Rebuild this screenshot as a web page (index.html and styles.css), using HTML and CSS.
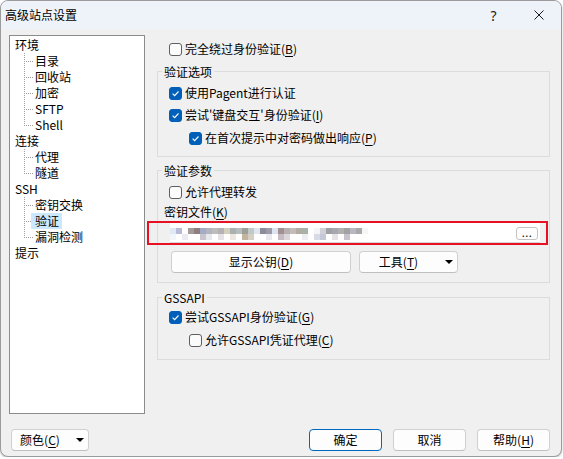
FILE: index.html
```html
<!DOCTYPE html>
<html lang="zh-CN">
<head>
  <meta charset="UTF-8" />
  <meta name="viewport" content="width=device-width, initial-scale=1.0" />
  <title>高级站点设置</title>
  <link rel="stylesheet" href="styles.css">
</head>
<body>
  <div class="window">
    <div class="titlebar">
      <div class="title">高级站点设置</div>
      <div class="caption-btn help">?</div>
      <div class="caption-btn">
        <svg width="10" height="10" viewBox="0 0 10 10"><path d="M0.5 0.5 9.5 9.5M9.5 0.5 0.5 9.5" stroke="#1a1a1a" stroke-width="1" fill="none"/></svg>
      </div>
    </div>

    <div class="main">
      <ul class="tree">
        <li class="node">环境</li>
        <li class="leaf">目录</li>
        <li class="leaf">回收站</li>
        <li class="leaf">加密</li>
        <li class="leaf">SFTP</li>
        <li class="leaf last">Shell</li>
        <li class="node">连接</li>
        <li class="leaf">代理</li>
        <li class="leaf last">隧道</li>
        <li class="node">SSH</li>
        <li class="leaf">密钥交换</li>
        <li class="leaf"><span class="selected">验证</span></li>
        <li class="leaf last">漏洞检测</li>
        <li class="node">提示</li>
      </ul>

      <div class="panel">
        <label class="check top"><span class="box"></span>完全绕过身份验证(<u>B</u>)</label>

        <div class="group">
          <div class="legend">验证选项</div>
          <label class="check"><span class="box on"><svg width="11" height="11" viewBox="0 0 11 11"><path d="M2.6 5.6 4.6 7.6 8.5 3.5" stroke="#fff" stroke-width="1.1" fill="none"/></svg></span>使用Pagent进行认证</label>
          <label class="check"><span class="box on"><svg width="11" height="11" viewBox="0 0 11 11"><path d="M2.6 5.6 4.6 7.6 8.5 3.5" stroke="#fff" stroke-width="1.1" fill="none"/></svg></span>尝试'键盘交互'身份验证(<u>I</u>)</label>
          <label class="check sub"><span class="box on"><svg width="11" height="11" viewBox="0 0 11 11"><path d="M2.6 5.6 4.6 7.6 8.5 3.5" stroke="#fff" stroke-width="1.1" fill="none"/></svg></span>在首次提示中对密码做出响应(<u>P</u>)</label>
        </div>

        <div class="group auth-params">
          <div class="legend">验证参数</div>
          <label class="check"><span class="box"></span>允许代理转发</label>
          <div class="field-label">密钥文件(<u>K</u>)</div>
          <div class="keyrow">
            <div class="keyfile">
              <div class="mosaic"></div>
              <div class="browse">...</div>
            </div>
          </div>
          <div class="btnrow">
            <div class="btn btn-wide">显示公钥(<u>D</u>)</div>
            <div class="btn btn-menu tools"><span class="btn-text">工具(<u>T</u>)</span><span class="caret"></span></div>
          </div>
        </div>

        <div class="group gss">
          <div class="legend">GSSAPI</div>
          <label class="check"><span class="box on"><svg width="11" height="11" viewBox="0 0 11 11"><path d="M2.6 5.6 4.6 7.6 8.5 3.5" stroke="#fff" stroke-width="1.1" fill="none"/></svg></span>尝试GSSAPI身份验证(<u>G</u>)</label>
          <label class="check sub"><span class="box"></span>允许GSSAPI凭证代理(<u>C</u>)</label>
        </div>
      </div>
    </div>

    <div class="footer">
      <div class="btn btn-menu colors"><span class="btn-text">颜色(<u>C</u>)</span><span class="caret"></span></div>
      <div class="footer-right">
        <div class="btn btn-dlg default">确定</div>
        <div class="btn btn-dlg">取消</div>
        <div class="btn btn-dlg">帮助(<u>H</u>)</div>
      </div>
    </div>
  </div>
</body>
</html>
```

FILE: styles.css
```css
* {
  box-sizing: border-box;
}
body {
  margin: 0;
  background: #fff;
  font-family: "Noto Sans CJK SC", "Noto Sans", sans-serif;
  font-size: 12px;
  color: #000;
}
u {
  text-underline-offset: 2px;
}
.window {
  width: 562px;
  height: 457px;
  border: 1px solid #9b9b9b;
  border-radius: 8px;
  background: #f0f0f0;
  overflow: hidden;
  display: flex;
  flex-direction: column;
  box-shadow: 0 1px 2px rgba(0, 0, 0, 0.25);
}
.titlebar {
  height: 28px;
  flex: none;
  background: #eef3fa;
  display: flex;
  align-items: center;
}
.title {
  flex: 1;
  padding-left: 4px;
  line-height: 16px;
}
.caption-btn {
  width: 45px;
  height: 28px;
  display: flex;
  align-items: center;
  justify-content: center;
}
.help {
  font-family: "Noto Sans", sans-serif;
  font-size: 14px;
  color: #1a1a1a;
}

.main {
  display: flex;
  gap: 12px;
  padding: 6px 0 0 8px;
}
.tree {
  width: 136px;
  height: 379px;
  margin: 0;
  padding: 1px 0 0;
  list-style: none;
  background: #fff;
  border: 1px solid #8c8c8c;
  flex: none;
}
.tree li {
  height: 16px;
  line-height: 16px;
  white-space: nowrap;
}
.node {
  padding-left: 5px;
}
.leaf {
  padding-left: 25px;
  background:
    repeating-linear-gradient(to right, #a0a0a0 0 1px, transparent 1px 2px) 14px 8px / 9px 1px no-repeat,
    repeating-linear-gradient(to bottom, #a0a0a0 0 1px, transparent 1px 2px) 14px 0 / 1px 16px no-repeat;
}
.leaf.last {
  background-size: 9px 1px, 1px 9px;
}
.selected {
  display: inline-block;
  margin-left: -4px;
  padding: 0 3px 0 4px;
  background: #cce8ff;
}

.panel {
  width: 393px;
  padding-top: 6px;
}
.check {
  display: flex;
  align-items: center;
  height: 16px;
  line-height: 16px;
  white-space: nowrap;
}
.check.top {
  margin-left: 12px;
}
.check + .check {
  margin-top: 6px;
}
.check.sub {
  margin-top: 7px;
  margin-left: 20px;
}
.box {
  width: 13px;
  height: 13px;
  flex: none;
  margin-right: 3px;
  border: 1px solid #5f5f5f;
  border-radius: 3px;
  background: #fbfbfb;
  display: flex;
}
.box.on {
  background: #005fb8;
  border-color: #005fb8;
}

.group {
  border: 1px solid #dcdcdc;
  margin-top: 14px;
  padding: 0 9px 10px 11px;
}
.group.auth-params {
  margin-top: 13px;
  padding-bottom: 9px;
}
.group.gss {
  padding-bottom: 11px;
}
.legend {
  width: fit-content;
  margin: -8px 0 0 -7px;
  padding: 0 2px;
  line-height: 16px;
  background: #f0f0f0;
}
.legend + .check {
  margin-top: 5px;
}
.gss .legend + .check {
  margin-top: 3px;
}
.field-label {
  margin: 4px 0 0 -5px;
  line-height: 16px;
}
.keyrow {
  display: flex;
  margin: 1px -8px 0 -22px;
  padding: 0 6px 0 21px;
  border: 2px solid #e81123;
}
.keyfile {
  flex: 1;
  height: 20px;
  display: flex;
  align-items: flex-start;
  justify-content: space-between;
  background: #fff;
  border-bottom: 1px solid #d8d8d8;
}
.mosaic {
  width: 198px;
  height: 12px;
  margin-top: 5px;
  background:
    linear-gradient(to right,
      #dfe8f3 0 6px, #b8bbd5 6px 12px, #ffffff 12px 18px, #a39b9b 18px 24px,
      #8e7e7f 24px 30px, #a3abc7 30px 36px, #b1b6be 36px 42px, #bdbdbd 42px 48px,
      #b5b1b5 48px 54px, #d2d1bd 54px 60px, #a9b1b1 60px 66px, #b7bebe 66px 72px,
      #9e9f97 72px 78px, #c3c8c8 78px 84px, #dfe6ee 84px 90px, #8b8b9b 90px 96px,
      #9c9ca8 96px 102px, #dce4f2 102px 108px, #a09092 108px 114px, #b8b0b0 114px 120px,
      #c4bcb8 120px 126px, #b2aca2 126px 132px, #a9b2a8 132px 138px, #ffffff 138px 144px,
      #f4f4f6 144px 150px, #d0d0d8 150px 156px, #a0a0a4 156px 162px, #a6a8b0 162px 168px,
      #b4b0b0 168px 174px, #a2a2a2 174px 180px, #b8b8c0 180px 186px, #a9a9a9 186px 192px,
      #f6f6f6 192px 198px) 0 0 / 198px 6px no-repeat,
    linear-gradient(to right,
      #f2f6fb 0 6px, #ffffff 6px 12px, #eceaf2 12px 18px, #ffffff 18px 30px,
      #c9c4cc 30px 36px, #e6e8ee 36px 42px, #ffffff 42px 48px, #e4e2e6 48px 54px,
      #ffffff 54px 60px, #ece8e0 60px 66px, #ffffff 66px 72px, #c2b4a0 72px 78px,
      #d6d0c4 78px 84px, #ffffff 84px 96px, #e8e8ee 96px 102px, #ffffff 102px 108px,
      #c6bcc4 108px 114px, #ddd6da 114px 120px, #ffffff 120px 132px, #eeeef2 132px 138px,
      #ffffff 138px 144px, #d8dae6 144px 150px, #c6c8d8 150px 156px, #ffffff 156px 162px,
      #e6e2e6 162px 168px, #ffffff 168px 174px, #cac2ca 174px 180px, #ffffff 180px 198px) 0 6px / 198px 6px no-repeat;
}
.browse {
  width: 22px;
  height: 13px;
  margin: 4px 2px 0 0;
  border: 1px solid #c4c4c4;
  border-radius: 3px;
  background: #fdfdfd;
  text-align: center;
  line-height: 9px;
  font-size: 11px;
  letter-spacing: 0.5px;
}

.btn {
  height: 22px;
  display: flex;
  align-items: center;
  justify-content: center;
  line-height: 16px;
  border: 1px solid #d0d0d0;
  border-bottom-color: #c0c0c0;
  border-radius: 4px;
  background: #fdfdfd;
  white-space: nowrap;
}
.btnrow {
  display: flex;
  gap: 8px;
  margin: 6px 0 0 2px;
}
.btn-wide {
  width: 180px;
}
.btn-menu {
  justify-content: flex-start;
}
.btn-menu.tools {
  width: 99px;
}
.btn-text {
  flex: 1;
  text-align: center;
}
.caret {
  width: 0;
  height: 0;
  margin: 0 4px 0 8px;
  border-left: 4px solid transparent;
  border-right: 4px solid transparent;
  border-top: 4px solid #000;
}

.footer {
  display: flex;
  padding: 15px 11px 0 10px;
}
.btn-menu.colors {
  width: 78px;
}
.footer-right {
  display: flex;
  gap: 11px;
  margin-left: auto;
}
.btn-dlg {
  width: 73px;
}
.btn-dlg.default {
  border-color: #0067c0;
}
```
